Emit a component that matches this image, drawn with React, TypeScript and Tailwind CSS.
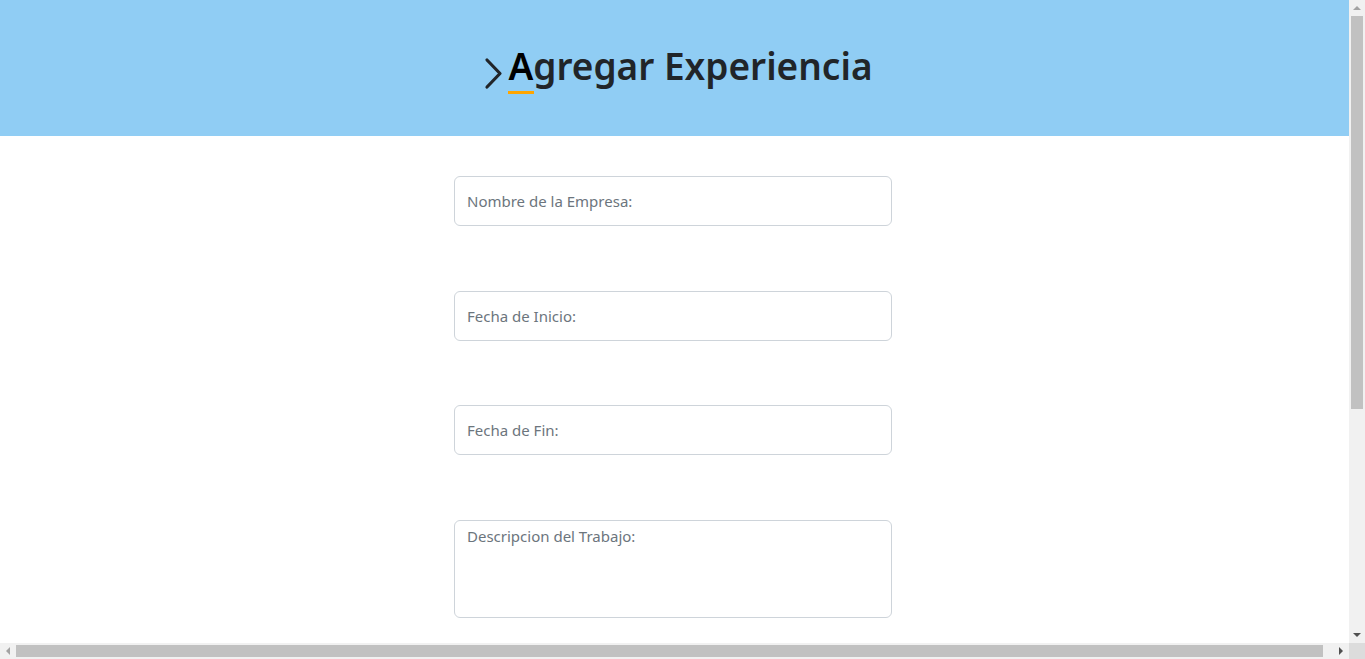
const fields = ['Nombre de la Empresa:', 'Fecha de Inicio:', 'Fecha de Fin:'];

function Arrow({ dir, dark }: { dir: 'up' | 'down' | 'left' | 'right'; dark?: boolean }) {
  const pts = {
    up: '4,10 8,6 12,10',
    down: '4,6 12,6 8,10',
    left: '10,4 10,12 6,8',
    right: '6,4 6,12 10,8',
  }[dir];
  return (
    <div className="w-4 h-4 shrink-0 flex items-center justify-center">
      <svg width="16" height="16" viewBox="0 0 16 16">
        <polygon points={pts} fill={dark ? '#505050' : '#a3a3a3'} />
      </svg>
    </div>
  );
}

export default function App() {
  return (
    <div className="h-screen w-screen flex flex-col overflow-hidden bg-white font-['Noto_Sans',sans-serif] text-[#212529]">
      <div className="flex flex-1 min-h-0">
        {/* page */}
        <div className="flex-1 min-w-0 overflow-hidden">
          <header className="w-[1365px] h-[136px] bg-[#90cdf4] flex items-center justify-center">
            <h1 className="flex items-end text-[37px] font-semibold leading-none mt-[-6px] mr-[8px]">
              <svg width="20" height="33" viewBox="0 0 20 33" className="mr-[4px] mb-[-6px]">
                <path d="M3 3 L16 16.5 L3 30" fill="none" stroke="#212529" strokeWidth="3.2" strokeLinecap="round" strokeLinejoin="round" />
              </svg>
              <span className="relative text-black">
                A
                <span className="absolute left-0 right-[-1px] bottom-[-10px] h-[3px] bg-[#ffa500]" />
              </span>
              <span>gregar Experiencia</span>
            </h1>
          </header>

          <div className="pr-[3px]">
            <form className="w-[438px] mx-auto pt-10 flex flex-col gap-[64.6px]">
              {fields.map((f) => (
                <input
                  key={f}
                  type="text"
                  placeholder={f}
                  className="h-[50px] w-full border border-[#ced4da] rounded-md px-3 text-[15px] text-[#495057] placeholder:text-[#6c757d] outline-none"
                />
              ))}
              <textarea
                placeholder="Descripcion del Trabajo:"
                className="h-[98px] w-full border border-[#ced4da] rounded-md px-3 py-1 text-[15px] text-[#495057] placeholder:text-[#6c757d] outline-none resize-none"
              />
            </form>
          </div>
        </div>

        {/* vertical scrollbar */}
        <div className="w-4 shrink-0 bg-[#f1f1f1] flex flex-col">
          <Arrow dir="up" />
          <div className="h-[393px] mx-[2px] bg-[#c1c1c1]" />
          <div className="flex-1" />
          <Arrow dir="down" dark />
        </div>
      </div>

      {/* horizontal scrollbar */}
      <div className="h-4 shrink-0 flex bg-[#f1f1f1]">
        <Arrow dir="left" />
        <div className="flex-1 my-[2px] bg-[#c1c1c1]" />
        <div className="w-[10px]" />
        <Arrow dir="right" dark />
        <div className="w-4 bg-[#dcdcdc]" />
      </div>
    </div>
  );
}
